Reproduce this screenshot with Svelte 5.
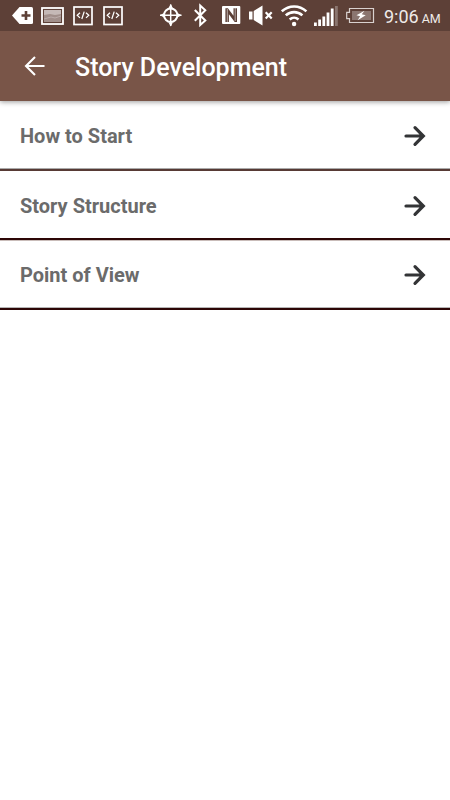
<script>
  const topics = [
    { title: "How to Start", line: "soft" },
    { title: "Story Structure", line: "early" },
    { title: "Point of View", line: "late" },
  ];
</script>

<div class="screen">
  <div class="status">
    <div class="icons left">
      <svg width="21" height="31" viewBox="0 0 21 31">
        <path d="M0 15.5 7.5 7H19.5Q21 7 21 8.5V22.5Q21 24 19.5 24H7.5Z" fill="#fff" />
        <path d="M14 11v9M9.5 15.5h9" stroke="#5d4037" stroke-width="2.6" />
      </svg>
      <svg width="23" height="31" viewBox="0 0 23 31">
        <rect x="1" y="8" width="21" height="16" fill="#5d4037" stroke="#fff" stroke-width="1.8" />
        <rect x="3" y="10" width="17" height="12" fill="#a18f8b" />
        <path d="M3 10h17v4l-6 1-5-1-6 1z" fill="#c5b9b7" />
        <path d="M3 19l7-2 4 1 6-2" fill="none" stroke="#c5b9b7" stroke-width=".7" />
      </svg>
      {#each [1, 2] as n (n)}
        <svg width="20" height="31" viewBox="0 0 20 31">
          <rect x="1" y="7" width="18" height="17.5" fill="none" stroke="#fff" stroke-width="1.7" />
          <path d="M7 12.7 4.2 15.3 7 17.9M13 12.7l2.8 2.6L13 17.9M11.2 11.6 8.8 19" fill="none" stroke="#fff" stroke-width="1.25" />
        </svg>
      {/each}
    </div>
    <div class="icons right">
      <svg class="gps" width="22" height="31" viewBox="0 0 22 31">
        <circle cx="10.7" cy="15.3" r="6.7" fill="none" stroke="#fff" stroke-width="2" />
        <path d="M10.7 4.5v21.6M0 15.3h21.5" stroke="#fff" stroke-width="1.5" />
        <path d="M10.7 4l2.2 4H8.5zM10.7 26.5l2.2-4H8.5zM0 15.3l4-2.2v4.4zM21.5 15.3l-4-2.2v4.4z" fill="#fff" />
      </svg>
      <svg class="bluetooth" width="14" height="31" viewBox="0 0 14 31">
        <path d="M.8 10 11.3 20.5 6.2 25V5.5l5.1 4.7L.8 20.8" fill="none" stroke="#fff" stroke-width="2" />
      </svg>
      <svg class="nfc" width="19" height="31" viewBox="0 0 19 31">
        <rect x="0" y="6" width="18.3" height="18" rx="1" fill="#fff" />
        <path d="M3.4 8.2h2.5l5.6 7.6V8.2H15v13.9h-2.3L6.9 14.3v7.8H3.4z" fill="#5d4037" />
        <path d="M5.3 9v13.4M13.2 8v13" stroke="#fff" stroke-width="1" opacity=".55" />
      </svg>
      <svg class="mute" width="25" height="31" viewBox="0 0 25 31">
        <path d="M0 11.5h3.5v8H0zM4.7 11 13.5 5.5v20L4.7 20z" fill="#fff" />
        <path d="M16.7 12.2l6 6.2M22.7 12.2l-6 6.2" stroke="#fff" stroke-width="2.2" />
      </svg>
      <svg class="wifi" width="27" height="31" viewBox="0 0 27 31">
        <g fill="none" stroke="#fff" stroke-width="2.6">
          <path d="M.8 11.4C8 4.8 18.2 4.8 25.4 11.4" />
          <path d="M4.8 15.4c4.8-4.4 11.8-4.4 16.6 0" />
          <path d="M8.7 19.5c2.6-2.4 6.2-2.4 8.8 0" />
        </g>
        <circle cx="13.1" cy="24" r="2.2" fill="#fff" />
      </svg>
      <svg class="signal" width="24" height="31" viewBox="0 0 24 31">
        <path d="M0 22.5h2.8V26H0zM4.2 19.5H7V26H4.2zM8.4 16.5h2.8V26H8.4zM12.6 12.5h2.8V26h-2.8zM16.8 8.5h2.8V26h-2.8z" fill="#fff" />
        <path d="M21 6h2.8v20H21z" fill="#8b7670" />
      </svg>
      <svg class="battery" width="29" height="31" viewBox="0 0 29 31">
        <path d="M3.5 8.5h24v14h-24v-3.8H.7v-6.4h2.8z" fill="none" stroke="#d9d1cf" stroke-width="1.2" />
        <rect x="6" y="11" width="19" height="9" fill="#8b7670" />
        <path d="M18.5 10.8 10.5 15.2l3.6 1-2.4 4 8-5-3.9-.9z" fill="#fff" />
      </svg>
      <div class="time">
        <span>9:06</span>
        <small>AM</small>
      </div>
    </div>
  </div>

  <header>
    <svg width="22" height="22" viewBox="0 0 22 22">
      <path d="M20.5 11H2M11 2 2 11l9 9" fill="none" stroke="#fff" stroke-width="2.1" />
    </svg>
    <h1>Story Development</h1>
  </header>

  <ul>
    {#each topics as topic (topic.title)}
      <li class={topic.line}>
        <span>{topic.title}</span>
        <svg width="24" height="24" viewBox="0 0 24 24">
          <path d="M3 12h17M12 3.7 20.3 12 12 20.3" fill="none" stroke="#333436" stroke-width="3.2" stroke-linecap="round" />
        </svg>
      </li>
    {/each}
  </ul>
</div>

<style>
  :global(body) {
    margin: 0;
    background: #fff;
  }
  .screen {
    width: 450px;
    height: 800px;
    overflow: hidden;
    background: #fff;
    font-family: Roboto, "Liberation Sans", sans-serif;
  }
  svg {
    display: block;
    flex: none;
  }
  .status {
    position: relative;
    z-index: 2;
    display: flex;
    justify-content: space-between;
    height: 31px;
    background: #5d4037;
  }
  .icons {
    display: flex;
  }
  .left {
    padding-left: 12px;
  }
  .left svg:nth-child(2) {
    margin-left: 8px;
  }
  .left svg:nth-child(3) {
    margin-left: 9px;
  }
  .left svg:nth-child(4) {
    margin-left: 10px;
  }
  .right {
    width: 290px;
  }
  .bluetooth {
    margin-left: 12px;
  }
  .nfc {
    margin-left: 14px;
  }
  .mute {
    margin-left: 8px;
  }
  .wifi {
    margin-left: 7px;
  }
  .signal {
    margin-left: 6px;
  }
  .battery {
    margin-left: 8px;
  }
  .time {
    display: flex;
    align-items: baseline;
    gap: 3px;
    margin-left: 9px;
    font-size: 18px;
    line-height: 33px;
    color: #efebe9;
    white-space: nowrap;
  }
  .time small {
    font-size: 12.5px;
    line-height: 1;
  }
  header {
    position: relative;
    display: flex;
    align-items: center;
    height: 70px;
    padding-left: 24px;
    background: #795548;
    box-shadow: 0 1px 5px rgba(0, 0, 0, 0.4);
  }
  h1 {
    margin: 2px 0 0 29px;
    font-size: 25px;
    font-weight: 500;
    color: #fff;
  }
  ul {
    margin: 0;
    padding: 0;
    list-style: none;
  }
  li {
    display: flex;
    align-items: center;
    justify-content: space-between;
    box-sizing: border-box;
    height: 70px;
    padding: 2px 23px 0 20px;
    border-bottom: 2px solid #2d0606;
    font-size: 20px;
    font-weight: 700;
    color: #6b6b6b;
  }
  li.soft {
    border-bottom-color: #573a35;
    box-shadow: inset 0 -1px #aaa;
  }
  li.early {
    height: 69px;
    box-shadow: 0 1px #c9bcb9;
  }
  li.late {
    box-shadow: inset 0 -1px #b5b5b5;
  }
</style>
